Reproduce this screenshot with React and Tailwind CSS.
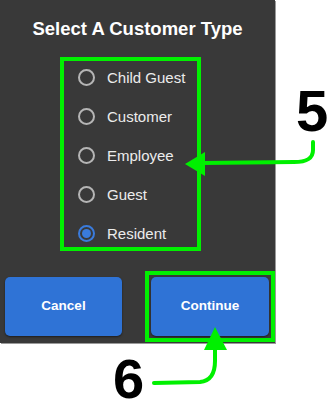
import React, { useState } from "react";

const types = ["Child Guest", "Customer", "Employee", "Guest", "Resident"];

const Radio = ({ checked }) => (
  <span
    className={`flex h-[17px] w-[17px] shrink-0 items-center justify-center rounded-full border-2 ${
      checked ? "border-[#3a7bdc]" : "border-[#b5b5b5]"
    }`}
  >
    {checked && <span className="h-[9px] w-[9px] rounded-full bg-[#3a7bdc]" />}
  </span>
);

const App = () => {
  const [selected, setSelected] = useState("Resident");

  return (
    <div
      className="relative h-[403px] w-[334px] overflow-hidden bg-white"
      style={{ fontFamily: '"Liberation Sans", Arial, sans-serif' }}
    >
      {/* dialog */}
      <div className="flex h-[343px] w-[275px] flex-col bg-[#393939] shadow-[1px_1px_0_#9a9a9a]">
        <h2 className="pt-[19px] text-center text-[18.5px] leading-[20px] font-bold text-white">
          Select A Customer Type
        </h2>

        {/* options (green box is the annotation) */}
        <div className="mt-[18px] ml-[60px] flex w-[141px] flex-col gap-[11px] border-4 border-[#00f000] pt-[2px] pl-[14px]">
          {types.map((t) => (
            <label
              key={t}
              onClick={() => setSelected(t)}
              className="flex h-[28px] cursor-pointer items-center gap-[12px]"
            >
              <Radio checked={selected === t} />
              <span className="text-[15px] leading-none whitespace-nowrap text-[#ececec]">{t}</span>
            </label>
          ))}
        </div>

        {/* buttons */}
        <div className="mt-[20px] flex items-center pl-[5px]">
          <button className="h-[59px] w-[118px] rounded-[5px] bg-[#2f73d6] text-[13.5px] font-bold text-white shadow-[0_1px_2px_rgba(0,0,0,0.5)]">
            Cancel
          </button>
          <div className="ml-[23px] border-4 border-[#00f000] p-[2px]">
            <button className="block h-[59px] w-[118px] rounded-[5px] bg-[#2f73d6] text-[13.5px] font-bold text-white shadow-[0_1px_2px_rgba(0,0,0,0.5)]">
              Continue
            </button>
          </div>
        </div>
      </div>

      {/* step numbers */}
      <span className="absolute top-[82px] left-[296px] text-[58px] leading-[58px] font-bold text-black">5</span>
      <span className="absolute top-[357px] left-[113px] text-[56px] leading-[44px] font-bold text-black">6</span>

      {/* arrows */}
      <svg className="pointer-events-none absolute top-0 left-0" width="334" height="403" viewBox="0 0 334 403">
        <path
          d="M313 142 L313 150 C313 159 306 162 294 162 L202 163"
          fill="none"
          stroke="#00f000"
          strokeWidth="4"
          strokeLinecap="round"
        />
        <polygon points="185,164 205,152 205,176" fill="#00f000" />
        <path
          d="M154 383 L200 382 C211 381 215 373 215 361 L215 346"
          fill="none"
          stroke="#00f000"
          strokeWidth="4"
          strokeLinecap="round"
        />
        <polygon points="215,327 204,350 227,350" fill="#00f000" />
      </svg>
    </div>
  );
};

export default App;
